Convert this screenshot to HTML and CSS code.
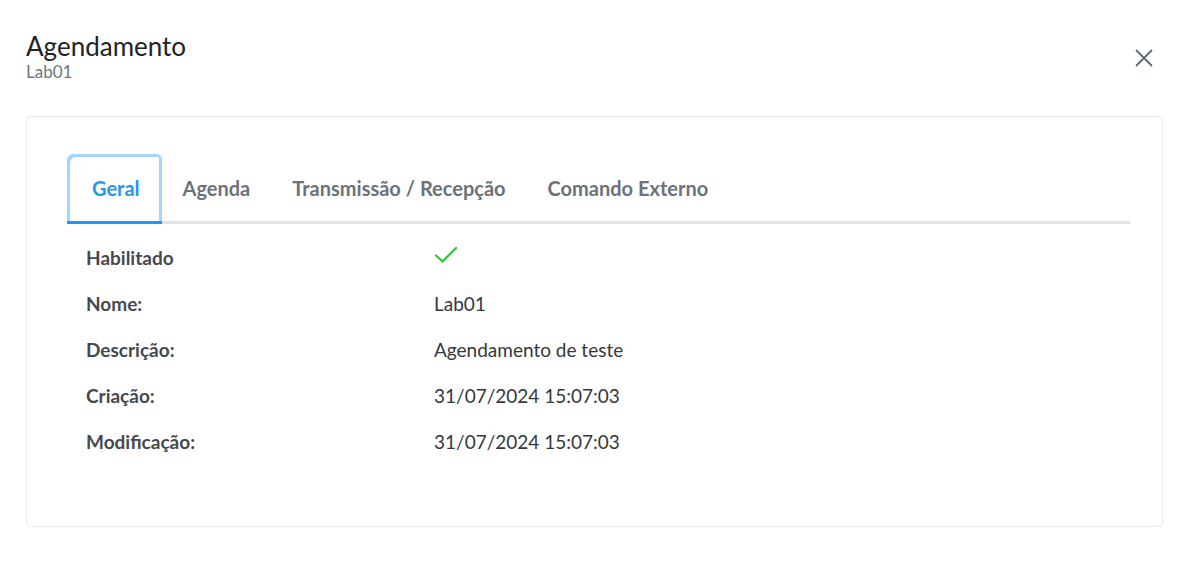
FILE: index.html
```html
<!DOCTYPE html>
<html lang="pt">
<head>
<meta charset="utf-8">
<link rel="stylesheet" href="styles.css">
</head>
<body>
<div class="modal">
  <header class="modal-header">
    <div class="titles">
      <h1 class="title">Agendamento</h1>
      <div class="subtitle">Lab01</div>
    </div>
    <button class="close" aria-label="Fechar">
      <svg width="18" height="18" viewBox="0 0 18 18"><path d="M1 1L17 17M17 1L1 17" stroke="#5d6b78" stroke-width="1.8" fill="none"/></svg>
    </button>
  </header>
  <section class="card">
    <nav class="tabs">
      <div class="tab active">Geral</div>
      <div class="tab">Agenda</div>
      <div class="tab">Transmissão / Recepção</div>
      <div class="tab">Comando Externo</div>
    </nav>
    <div class="details">
      <div class="label">Habilitado</div>
      <div class="value"><svg class="check" width="24" height="18" viewBox="0 0 24 18"><path d="M2 9.5L8.5 15.5L22 2" stroke="#35c23f" stroke-width="2.2" fill="none" stroke-linecap="round" stroke-linejoin="round"/></svg></div>
      <div class="label">Nome:</div>
      <div class="value">Lab01</div>
      <div class="label">Descrição:</div>
      <div class="value">Agendamento de teste</div>
      <div class="label">Criação:</div>
      <div class="value">31/07/2024 15:07:03</div>
      <div class="label">Modificação:</div>
      <div class="value">31/07/2024 15:07:03</div>
    </div>
  </section>
</div>
</body>
</html>
```
FILE: styles.css
```css
* { box-sizing: border-box; }
html, body { margin: 0; background: #ffffff; }
body {
  font-family: Lato, "Open Sans", sans-serif;
  color: #2b2f33;
}
.modal {
  padding: 30px 23px 0 26px;
}
.modal-header {
  display: flex;
  justify-content: space-between;
  align-items: flex-start;
  height: 86px;
}
.title {
  margin: 0;
  font-size: 26px;
  font-weight: 400;
  line-height: 32px;
  color: #1f2226;
}
.subtitle {
  font-size: 17px;
  line-height: 19px;
  color: #6c7680;
}
.close {
  border: 0;
  background: transparent;
  padding: 0;
  margin: 19px 10px 0 0;
  width: 18px;
  height: 18px;
  display: flex;
}
.card {
  width: 1137px;
  height: 411px;
  border: 1px solid #e8eaec;
  border-radius: 4px;
  padding: 37px 32px 0 40px;
}
.tabs {
  display: flex;
  border-bottom: 3px solid #dfe2e6;
  height: 70px;
}
.tab {
  padding: 1px 21px 0;
  display: flex;
  align-items: center;
  font-size: 20px;
  font-weight: 700;
  color: #6b727a;
  margin-bottom: -3px;
  border-bottom: 3px solid transparent;
}
.tab.active {
  color: #2b95ea;
  border-bottom-color: #2196f3;
  box-shadow: inset 3px 3px 0 #a8d5fb, inset -3px 0 0 #a8d5fb;
  border-radius: 6px 6px 0 0;
  padding: 1px 22px 0 25px;
}
.details {
  display: grid;
  grid-template-columns: 348px auto;
  grid-auto-rows: 46px;
  padding: 10px 0 0 19px;
  align-items: center;
}
.label {
  font-size: 19px;
  font-weight: 700;
  color: #45494e;
}
.value {
  font-size: 19px;
  color: #34383c;
}
.check { display: block; margin-top: -4px; }
```
